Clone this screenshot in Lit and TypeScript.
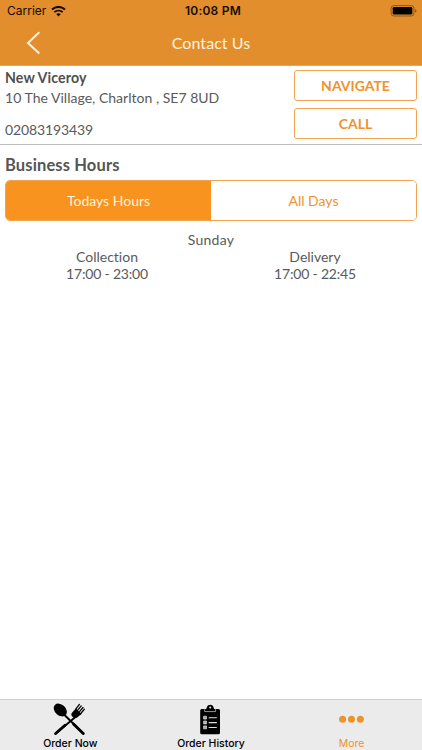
import { LitElement, html, svg, css } from "lit";
import { customElement, property, state } from "lit/decorators.js";
import { classMap } from "lit/directives/class-map.js";

@customElement("status-bar")
class StatusBar extends LitElement {
  static styles = css`
    :host {
      display: grid;
      grid-template-columns: 1fr auto 1fr;
      align-items: center;
      height: 22px;
      padding: 0 4px 0 7px;
      color: #160c02;
      font: 12px/22px Inter, "Liberation Sans", sans-serif;
    }
    .carrier { display: flex; align-items: center; gap: 5px; }
    .time { font-weight: 600; letter-spacing: 0.2px; padding-left: 1px; }
    .battery { justify-self: end; }
    svg { display: block; }
  `;
  render() {
    return html`
      <div class="carrier">
        <span>Carrier</span>
        <svg width="15" height="11" viewBox="0 0 15 11" fill="none" stroke="#160c02">
          <path d="M1 3.6C4.8 0 10.2 0 14 3.6" stroke-width="2" />
          <path d="M3.3 6.2C5.7 4 9.3 4 11.7 6.2" stroke-width="1.8" />
          <path d="M7.5 10.4 5.2 8.1Q7.5 6.2 9.8 8.1Z" fill="#160c02" stroke="none" />
        </svg>
      </div>
      <div class="time">10:08 PM</div>
      <svg class="battery" width="28" height="12" viewBox="0 0 28 12">
        <rect x="1.1" y=".6" width="22.8" height="10.4" rx="2.6" fill="none" stroke="#8b571c" />
        <rect x="2.7" y="2.1" width="19.6" height="7.4" rx="1.2" fill="#000" />
        <path d="M25 3.9Q26.6 4.8 26.6 5.8T25 7.7Z" fill="#8b571c" />
      </svg>
    `;
  }
}

type TabIcon = "cutlery" | "clipboard" | "dots";

@customElement("tab-item")
class TabItem extends LitElement {
  @property() label = "";
  @property() icon: TabIcon = "dots";
  static styles = css`
    :host {
      display: flex;
      flex-direction: column;
      align-items: center;
      padding-top: 3px;
      font: 500 10.5px/13px Inter, "Liberation Sans", sans-serif;
    }
    svg { display: block; }
  `;
  private glyph() {
    switch (this.icon) {
      case "cutlery":
        return svg`
          <g stroke="currentColor" stroke-linecap="round">
            <path d="M12 11.5 31.6 30.7M24 13.5 3.6 30.7" stroke-width="1.9" />
            <path d="M21.5 21 31.2 30.5M13 22.3 3.6 30.5" stroke-width="2.8" />
          </g>
          <ellipse cx="8.3" cy="7" rx="7.4" ry="5.4" transform="rotate(43 8.3 7)" fill="currentColor" />
          <path d="M20.2 9.6 23.8 5.4 29.4 11 25.2 14.4Q22 15.8 20.2 13.6T20.2 9.6Z" fill="currentColor" />
          <path d="M23.6 6.4 27.4 1.4M25.2 7.8 29.2 2.9M26.9 9.4 31 4.5M28.4 11 32.4 6.2" stroke="currentColor" stroke-width="1.3" stroke-linecap="round" />`;
      case "clipboard":
        return svg`
          <path d="M8.7 6H13Q13.7 5.4 13.9 4.1Q14.6 1.8 17.2 1.8T20.5 4.1Q20.7 5.4 21.4 6H25.6Q27 6 27 7.5V29.8Q27 31.3 25.6 31.3H8.7Q7.2 31.3 7.2 29.8V7.5Q7.2 6 8.7 6Z" fill="currentColor" />
          <path d="M11.7 6.2V8.6H22.6V6.2" stroke="#bbb" stroke-width=".8" />
          <circle cx="17.2" cy="4.6" r="1" fill="#ebebeb" />
          <path d="M10.6 13.2h2.9v2.9h-2.9zM10.6 18h2.9v2.9h-2.9zM10.6 22.9h2.9v2.9h-2.9z" fill="#aaa" stroke="#ddd" stroke-width=".7" />
          <path d="M15.7 14.8H23.8M15.7 19.6H23.8M15.7 24.5H23.8" stroke="#ddd" stroke-width="1.1" />`;
      default:
        return svg`<g fill="currentColor"><circle cx="8.6" cy="16.2" r="3.5" /><circle cx="17.5" cy="16.2" r="3.5" /><circle cx="26.4" cy="16.2" r="3.5" /></g>`;
    }
  }
  render() {
    return html`
      <svg width="36" height="34" viewBox="0 0 36 34" fill="none">${this.glyph()}</svg>
      <span>${this.label}</span>
    `;
  }
}

@customElement("app-root")
class AppRoot extends LitElement {
  @state() private segment = 0;

  static styles = css`
    :host {
      display: flex;
      flex-direction: column;
      height: 750px;
      box-sizing: border-box;
      background: #fff;
      color: #5a5a5a;
      font: 14px/17px Lato, "Open Sans", sans-serif;
      font-variant-ligatures: none;
    }
    * { box-sizing: border-box; }
    header { height: 66px; background: #e28e2c; border-bottom: 1px solid #e8a55a; flex: none; }
    .nav {
      display: grid;
      grid-template-columns: 40px 1fr 40px;
      align-items: center;
      height: 41px;
      padding: 0 13px;
      color: #fff3df;
    }
    .nav svg { display: block; margin: 1px 0 0 12px; }
    .title { text-align: center; font-size: 16px; letter-spacing: 0.05px; }
    .details {
      display: flex;
      justify-content: space-between;
      height: 79px;
      padding: 3px 5px 0;
      border-bottom: 1px solid #bdbdbd;
    }
    .name { font-weight: 700; font-size: 14.2px; color: #505050; line-height: 17px; letter-spacing: 0.1px; }
    .address { margin-top: 3px; letter-spacing: 0.02px; }
    .phone { margin-top: 15px; letter-spacing: -0.12px; }
    .actions { display: flex; flex-direction: column; gap: 7px; width: 123px; margin-top: 1px; }
    button { margin: 0; padding: 0; font: inherit; background: #fff; color: #f0922b; border: 0; }
    .action {
      height: 31px;
      padding-bottom: 1px;
      border: 1px solid #f3a453;
      border-radius: 3px;
      font-weight: 700;
    }
    .hours { padding: 11px 5px 0; }
    h2 { margin: 0 0 6px; font-size: 16.5px; line-height: 18px; font-weight: 700; color: #555; letter-spacing: 0.13px; }
    .segments {
      display: flex;
      height: 41px;
      border: 1px solid #f3a453;
      border-radius: 5px;
      overflow: hidden;
    }
    .segment { flex: 1; }
    .segment.active { background: #f7931e; color: #fff2da; }
    .day { margin-top: 10px; text-align: center; letter-spacing: 0.3px; }
    .services { display: grid; grid-template-columns: 1fr 1fr; text-align: center; margin: 0 -2px; }
    .time { letter-spacing: -0.18px; }
    .tabs {
      display: grid;
      grid-template-columns: repeat(3, 1fr);
      height: 51px;
      margin-top: auto;
      background: #ebebeb;
      border-top: 1px solid #cfcfcf;
      color: #000;
    }
    .tabs .current { color: #f0922b; font-weight: 400; }
  `;

  render() {
    return html`
      <header>
        <status-bar></status-bar>
        <div class="nav">
          <svg width="16" height="24" viewBox="0 0 16 24" fill="none" stroke="#fff3df" stroke-width="2">
            <path d="M14.3 1.2 3 11.9 14.3 22.6" />
          </svg>
          <div class="title">Contact Us</div>
        </div>
      </header>
      <section class="details">
        <div>
          <div class="name">New Viceroy</div>
          <div class="address">10 The Village, Charlton , SE7 8UD</div>
          <div class="phone">02083193439</div>
        </div>
        <div class="actions">
          <button class="action">NAVIGATE</button>
          <button class="action">CALL</button>
        </div>
      </section>
      <section class="hours">
        <h2>Business Hours</h2>
        <div class="segments">
          ${["Todays Hours", "All Days"].map(
            (label, i) => html`<button
              class=${classMap({ segment: true, active: this.segment === i })}
              @click=${() => (this.segment = i)}
            >${label}</button>`
          )}
        </div>
        <div class="day">Sunday</div>
        <div class="services">
          <div><div>Collection</div><div class="time">17:00 - 23:00</div></div>
          <div><div>Delivery</div><div class="time">17:00 - 22:45</div></div>
        </div>
      </section>
      <nav class="tabs">
        <tab-item icon="cutlery" label="Order Now"></tab-item>
        <tab-item icon="clipboard" label="Order History"></tab-item>
        <tab-item class="current" icon="dots" label="More"></tab-item>
      </nav>
    `;
  }
}
